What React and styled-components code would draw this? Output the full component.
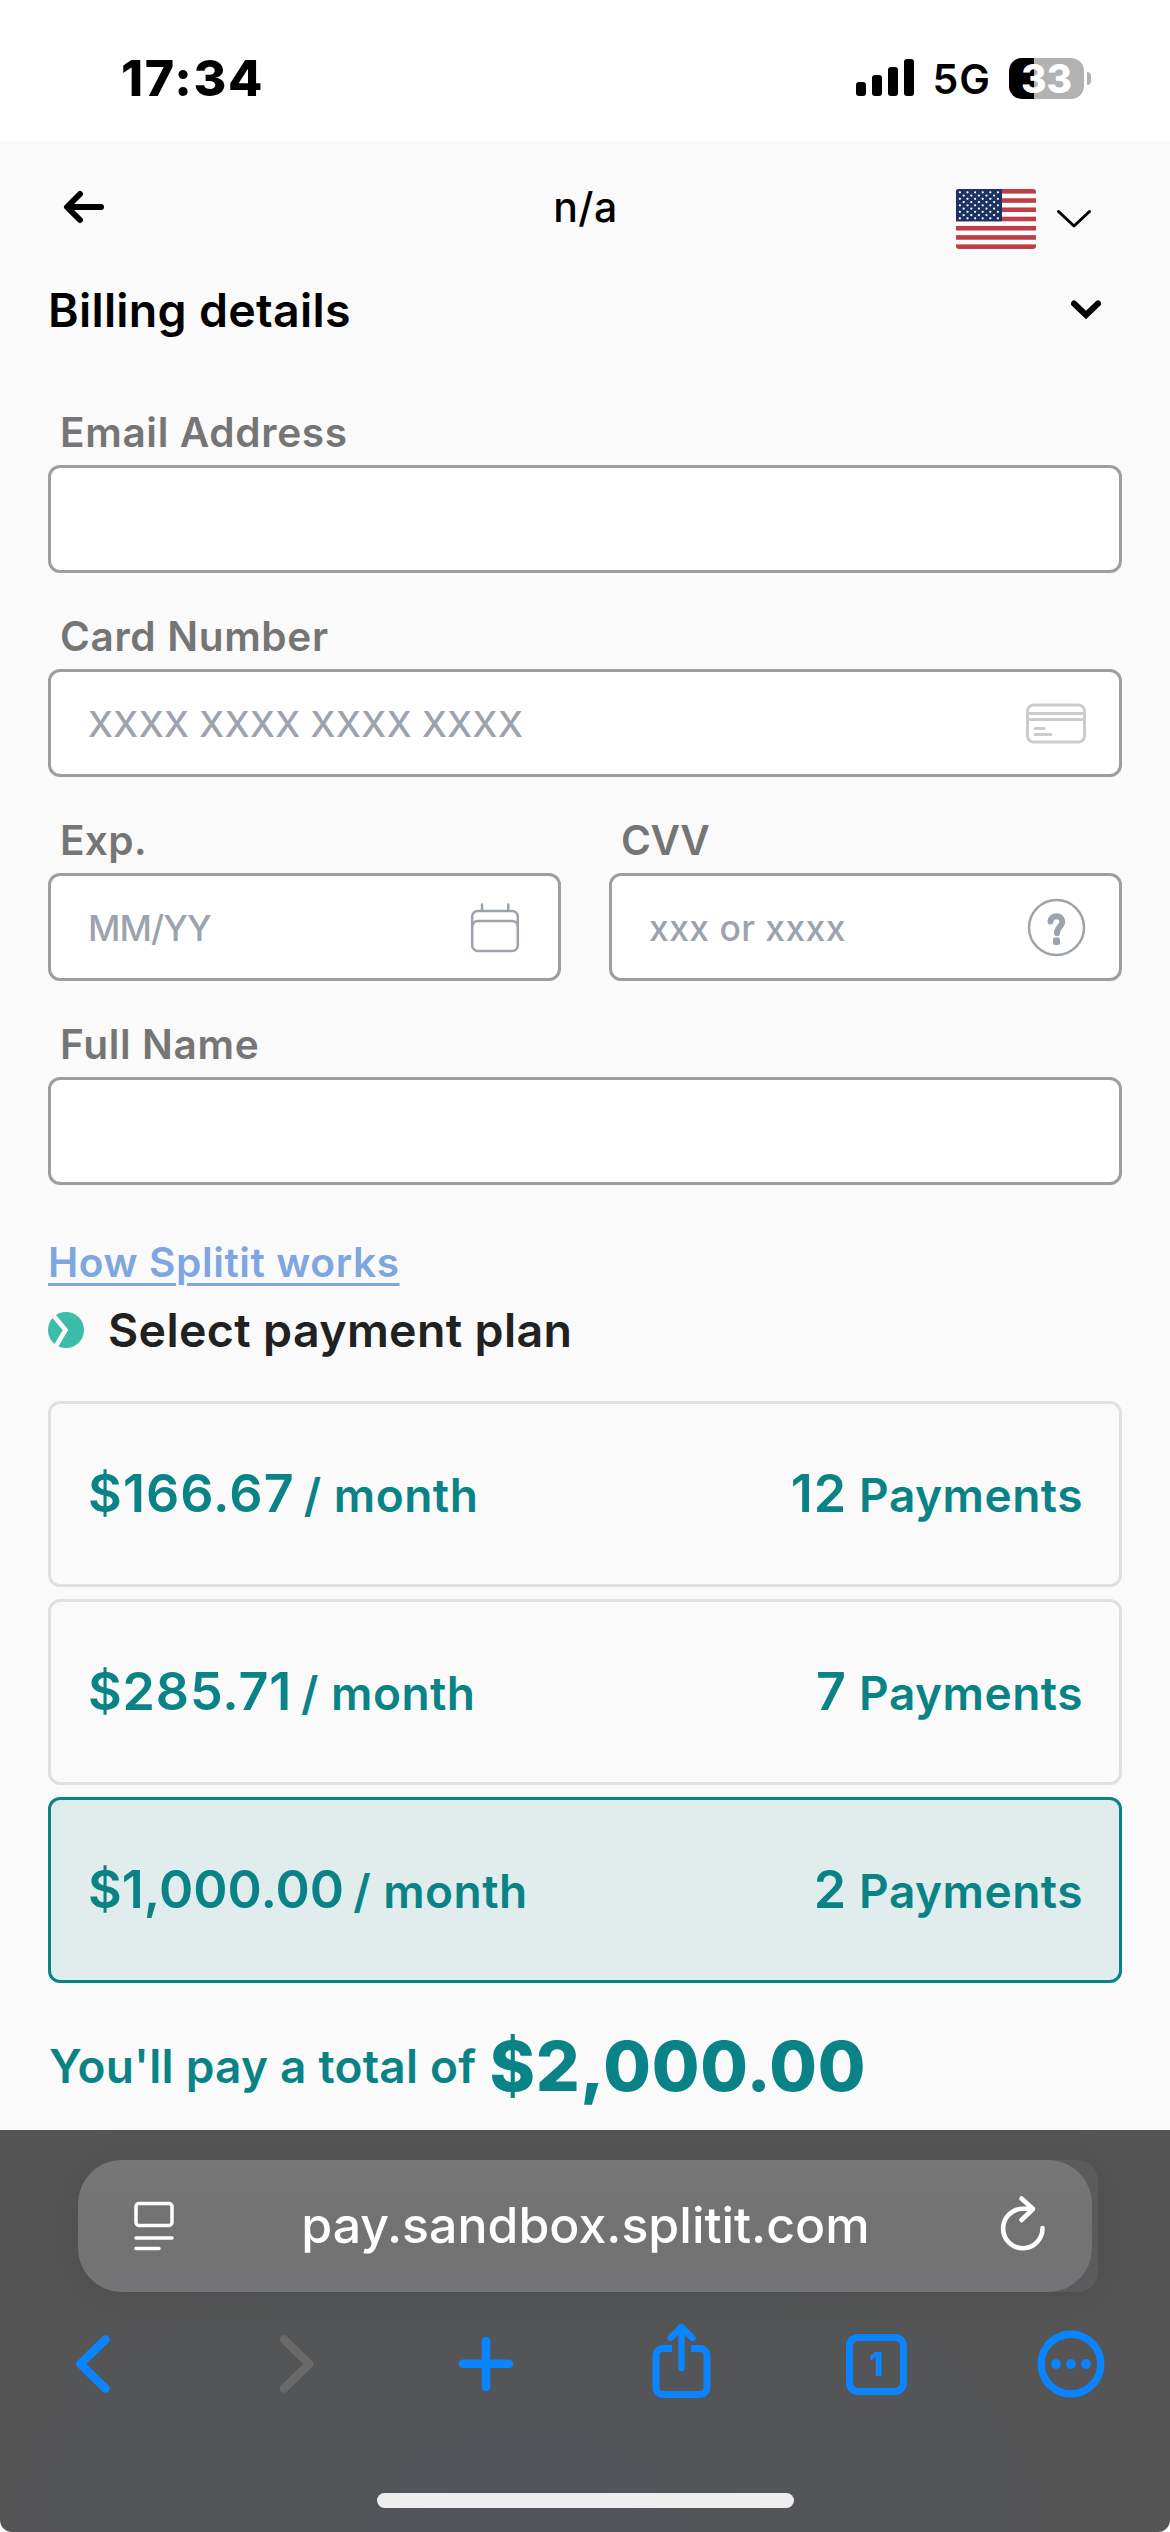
import styled, {createGlobalStyle} from "styled-components";

const GlobalStyle = createGlobalStyle`
    * {
        box-sizing: border-box;
    }
    body {
        margin: 0;
        background: #fff;
        font-family: Inter, "Liberation Sans", sans-serif;
        font-weight: 600;
    }
    svg {
        display: block;
        flex: none;
    }
`
const Screen = styled.div`
    width: 1170px;
    height: 2532px;
    overflow: hidden;
    display: flex;
    flex-direction: column;
`

/* status bar */
const StatusBar = styled.div`
    height: 141px;
    flex: none;
    padding: 15px 79px 0 121px;
    display: flex;
    align-items: center;
    justify-content: space-between;
    color: #000;
`
const Clock = styled.span`
    font-size: 50px;
    font-weight: 800;
    letter-spacing: 1.7px;
`
const StatusIcons = styled.div`
    display: flex;
    align-items: center;
`
const Network = styled.span`
    margin: 2px 18px 0 19px;
    font-size: 41px;
    letter-spacing: 1px;
`
const Battery = styled.div`
    width: 75px;
    height: 41px;
    border-radius: 13px;
    background: linear-gradient(to right, #000 33.3%, #b2b2b2 33.3%);
    color: #fff;
    font-size: 39px;
    font-weight: 800;
    line-height: 41px;
    text-align: center;
`
const BatteryTip = styled.div`
    width: 4px;
    height: 13px;
    margin-left: 3px;
    border-radius: 0 4px 4px 0;
    background: #b2b2b2;
`

/* checkout page */
const Page = styled.main`
    height: 1989px;
    flex: none;
    padding: 0 48px;
    background: #fafafa;
    display: flex;
    flex-direction: column;
`
const Header = styled.header`
    height: 132px;
    display: grid;
    grid-template-columns: 1fr auto 1fr;
    align-items: center;
    padding: 0 31px 0 15px;
`
const Merchant = styled.span`
    font-size: 41px;
    font-weight: 500;
    line-height: 50px;
    letter-spacing: 0.5px;
    padding-left: 17px;
`
const Language = styled.div`
    justify-self: end;
    margin-top: 24px;
    display: flex;
    align-items: center;
    gap: 19px;
`
const SectionTitle = styled.h2`
    height: 74px;
    margin: 0;
    padding-right: 21px;
    display: flex;
    align-items: center;
    justify-content: space-between;
    font-size: 46.5px;
    font-weight: 600;
    letter-spacing: 0.3px;
`
const Form = styled.form`
    display: grid;
    grid-template-columns: 1fr 1fr;
    gap: 38px 48px;
    padding-top: 60px;
`
const Field = styled.label`
    grid-column: ${props => props.$half ? "auto" : "1 / -1"};
    min-width: 0;
`
const FieldLabel = styled.span`
    display: block;
    margin: 0 0 7px 12px;
    padding-top: 1px;
    color: #757575;
    font-size: 40.6px;
    line-height: 50px;
    letter-spacing: ${props => props.$tracking ?? 0.65}px;
`
const InputBox = styled.div`
    height: 108px;
    padding: 0 33px 0 37px;
    border: 3px solid #9e9e9e;
    border-radius: 12px;
    background: #fff;
    display: flex;
    align-items: center;
`
const Input = styled.input`
    flex: 1;
    min-width: 0;
    height: 60px;
    padding: 2px 0 0;
    border: none;
    outline: none;
    background: none;
    font: inherit;
    font-size: 35.5px;
    font-weight: 500;
    letter-spacing: ${props => props.$tracking ?? 0}px;

    &::placeholder {
        color: #9ca3af;
        opacity: 1;
    }
`
const HelpLink = styled.a`
    align-self: flex-start;
    margin-top: 53px;
    color: #7ea6e0;
    font-size: 40.6px;
    line-height: 50px;
    letter-spacing: 0.6px;
    text-decoration: underline;
    text-decoration-thickness: 3px;
    text-underline-offset: 6px;
`
const PlanTitle = styled.h3`
    margin: 12px 0 41px;
    height: 60px;
    display: flex;
    align-items: center;
    gap: 24px;
    color: #212121;
    font-size: 46.5px;
    font-weight: 600;
    letter-spacing: 0.35px;
`
const Plans = styled.div`
    display: flex;
    flex-direction: column;
    gap: 12px;
`
const Plan = styled.div`
    height: 186px;
    padding: 0 36px 0 37px;
    border: 3px solid ${props => props.$selected ? "#0a8386" : "#e0e0e0"};
    border-radius: 12px;
    background: ${props => props.$selected ? "#e1edec" : "transparent"};
    color: #0a8386;
    display: flex;
    align-items: center;
    justify-content: space-between;
    font-size: 46px;
    line-height: 64px;
`
const PlanText = styled.div`
    letter-spacing: 0.5px;
    white-space: nowrap;
`
const Amount = styled.span`
    margin-right: 9px;
    font-size: 52px;
    letter-spacing: ${props => props.$tracking}px;
`
const Count = styled.span`
    font-size: 52px;
    letter-spacing: 1px;
`
const Total = styled.div`
    height: 100px;
    margin-top: 33px;
    padding-left: 1px;
    display: flex;
    align-items: center;
    gap: 13px;
    color: #0a8386;
    font-size: 46px;
    letter-spacing: 0.22px;
`
const TotalAmount = styled.strong`
    font-size: 69px;
    font-weight: 800;
    letter-spacing: 0.7px;
`

/* browser chrome */
const BrowserBar = styled.footer`
    height: 402px;
    flex: none;
    padding-top: 30px;
    border-radius: 0 0 12px 12px;
    background: radial-gradient(ellipse at 45% 100%, #51555a 0, #545557 40%, #555 75%);
`
const NextTab = styled.div`
    margin: 0 72px 0 78px;
    padding-right: 6px;
    border-radius: 44px 20px 20px 44px;
    background: #5b5b5d;
    box-shadow: 0 4px 40px rgba(0, 0, 0, 0.1);
`
const AddressBar = styled.div`
    height: 132px;
    padding: 0 41px 0 56px;
    border-radius: 44px;
    background: linear-gradient(#777, #727272 50%, #747476);
    color: #fff;
    display: flex;
    align-items: center;
    justify-content: space-between;
`
const Address = styled.span`
    padding: 0 2px 2px 0;
    font-size: 50px;
    font-weight: 500;
    letter-spacing: 0;
`
const Actions = styled.nav`
    height: 144px;
    padding: 0 63px 0 60px;
    display: flex;
    align-items: center;
    justify-content: space-between;
`
const TabCount = styled.div`
    width: 61px;
    height: 61px;
    margin: 0 5px 0 6px;
    border: 7px solid #0a84ff;
    border-radius: 12px;
    color: #0a84ff;
    font-size: 32px;
    font-weight: 800;
    line-height: 47px;
    text-align: center;
`
const HomeIndicator = styled.div`
    width: 417px;
    height: 15px;
    margin: 57px 0 0 377px;
    border-radius: 8px;
    background: #eee;
`

const SignalIcon = () => (
    <svg width="58" height="38" viewBox="0 0 58 38">
        <rect x="0" y="23" width="10" height="14" rx="3"/>
        <rect x="16" y="16" width="10" height="21" rx="3"/>
        <rect x="32" y="8" width="10" height="29" rx="3"/>
        <rect x="48" y="0" width="10" height="37" rx="3"/>
    </svg>
)

const BackArrow = () => (
    <svg width="42" height="34" viewBox="0 0 42 34" fill="none" stroke="#000" strokeWidth="6" strokeLinecap="round">
        <path d="M17 4L4 17l13 13M5 17h33" strokeLinejoin="round"/>
    </svg>
)

const Flag = () => {
    const stars = []
    for (let row = 0; row < 9; row++) {
        for (let col = row % 2; col < 11; col += 2) {
            stars.push(<circle key={`${row}-${col}`} cx={3.9 + col * 3.8} cy={3.3 + row * 3.25} r="1.15"/>)
        }
    }
    return (
        <svg width="80" height="60" viewBox="0 0 80 60">
            <clipPath id="flag"><rect width="80" height="60" rx="3"/></clipPath>
            <g clipPath="url(#flag)">
                <rect width="80" height="60" fill="#fff"/>
                {[0, 1, 2, 3, 4, 5, 6].map(i => (
                    <rect key={i} y={i * 9.23} width="80" height="4.6" fill="#bf3d47"/>
                ))}
                <rect width="46" height="32.3" fill="#1b3262"/>
                <g fill="#fff">{stars}</g>
            </g>
        </svg>
    )
}

const ThinChevron = () => (
    <svg width="36" height="20" viewBox="0 0 36 20" fill="none" stroke="#000" strokeWidth="3" strokeLinecap="round">
        <path d="M3.5 2.5L19 17L34.5 2.5" strokeLinejoin="round"/>
    </svg>
)

const BoldChevron = () => (
    <svg width="30" height="20" viewBox="0 0 30 20" fill="none" stroke="#000" strokeWidth="6" strokeLinecap="round">
        <path d="M3 3.5l12 11.5L27 3.5"/>
    </svg>
)

const CardIcon = () => (
    <svg width="60" height="42" viewBox="0 0 60 42" fill="none" stroke="#ccc" strokeWidth="3">
        <rect x="1.5" y="3" width="57" height="37" rx="6"/>
        <path d="M2 11.5h56M2 17.5h56"/>
        <path d="M9 26.5h9M9 32.5h16" strokeLinecap="round"/>
    </svg>
)

const CalendarIcon = () => (
    <svg width="58" height="52" viewBox="0 0 58 52" fill="none" stroke="#9ca3af" strokeWidth="2.5">
        <rect x="5.2" y="10" width="45.6" height="40" rx="5.5"/>
        <path d="M5.2 25.5a5.500 5.500 0 0 1 5.500-5.500h34.600a5.500 5.500 0 0 1 5.500 5.500"/>
        <path d="M15 3.5v6M41.3 3.5v6" strokeLinecap="round"/>
    </svg>
)

const HelpIcon = () => (
    <svg width="59" height="59" viewBox="0 0 59 59" fill="none" stroke="#9ca3af">
        <circle cx="29.5" cy="29.5" r="27.5" strokeWidth="2.5"/>
        <path d="M23.5 23.5c.3-3.3 2.7-5.2 6-5.2s5.800 2.200 5.800 5.400c0 5-5.300 5.300-5.300 11.500" strokeWidth="6" strokeLinecap="round"/>
        <rect x="26" y="39.5" width="7" height="7.5" rx="2" fill="#9ca3af" stroke="none"/>
    </svg>
)

const SplititMark = () => (
    <svg width="36" height="36" viewBox="0 0 36 36">
        <circle cx="18" cy="18" r="18" fill="#3bbda8"/>
        <path d="M5 3L17.5 18L7.5 35" fill="none" stroke="#fafafa" strokeWidth="4.6"/>
    </svg>
)

const PageIcon = () => (
    <svg width="40" height="50" viewBox="0 0 40 50" fill="none" stroke="#fff" strokeWidth="3.5">
        <rect x="2" y="2.5" width="36" height="22" rx="3"/>
        <path d="M2 37h36M2 47.500h23" strokeLinecap="round"/>
    </svg>
)

const ReloadIcon = () => (
    <svg width="52" height="62" viewBox="0 0 52 62" fill="none" stroke="#fff" strokeWidth="4.6" strokeLinecap="round" strokeLinejoin="round">
        <path d="M43.5 33A19.700 19.700 0 1 1 23.800 13.800h10"/>
        <path d="M22.5 3.5L34 14L22.5 25"/>
    </svg>
)

const ActionIcon = styled.svg`
    width: 72px;
    height: 84px;
    fill: none;
    stroke: ${props => props.$muted ? "#6a6a6a" : "#0a84ff"};
    stroke-width: 8.6px;
    stroke-linecap: round;
    stroke-linejoin: round;
`

const plans = [
    {amount: "$166.67", count: 12, tracking: 1.1},
    {amount: "$285.71", count: 7, tracking: 0.8},
    {amount: "$1,000.00", count: 2, tracking: 0, selected: true},
]

function BillingForm() {
    return (
        <Form>
            <Field>
                <FieldLabel>Email Address</FieldLabel>
                <InputBox><Input type="email"/></InputBox>
            </Field>
            <Field>
                <FieldLabel>Card Number</FieldLabel>
                <InputBox>
                    <Input placeholder="XXXX XXXX XXXX XXXX" $tracking={0.47}/>
                    <CardIcon/>
                </InputBox>
            </Field>
            <Field $half>
                <FieldLabel $tracking={0.3}>Exp.</FieldLabel>
                <InputBox>
                    <Input placeholder="MM/YY" $tracking={-0.9}/>
                    <CalendarIcon/>
                </InputBox>
            </Field>
            <Field $half>
                <FieldLabel $tracking={-0.4}>CVV</FieldLabel>
                <InputBox>
                    <Input placeholder="xxx or xxxx" $tracking={0.4}/>
                    <HelpIcon/>
                </InputBox>
            </Field>
            <Field>
                <FieldLabel>Full Name</FieldLabel>
                <InputBox><Input/></InputBox>
            </Field>
        </Form>
    )
}

function App() {
    return (
        <Screen>
            <GlobalStyle/>
            <StatusBar>
                <Clock>17:34</Clock>
                <StatusIcons>
                    <SignalIcon/>
                    <Network>5G</Network>
                    <Battery>33</Battery>
                    <BatteryTip/>
                </StatusIcons>
            </StatusBar>
            <Page>
                <Header>
                    <BackArrow/>
                    <Merchant>n/a</Merchant>
                    <Language>
                        <Flag/>
                        <ThinChevron/>
                    </Language>
                </Header>
                <SectionTitle>
                    Billing details
                    <BoldChevron/>
                </SectionTitle>
                <BillingForm/>
                <HelpLink>How Splitit works</HelpLink>
                <PlanTitle>
                    <SplititMark/>
                    Select payment plan
                </PlanTitle>
                <Plans>
                    {plans.map(plan => (
                        <Plan key={plan.count} $selected={plan.selected}>
                            <PlanText>
                                <Amount $tracking={plan.tracking}>{plan.amount}</Amount>/ month
                            </PlanText>
                            <PlanText>
                                <Count>{plan.count}</Count> Payments
                            </PlanText>
                        </Plan>
                    ))}
                </Plans>
                <Total>
                    You'll pay a total of
                    <TotalAmount>$2,000.00</TotalAmount>
                </Total>
            </Page>
            <BrowserBar>
                <NextTab>
                    <AddressBar>
                        <PageIcon/>
                        <Address>pay.sandbox.splitit.com</Address>
                        <ReloadIcon/>
                    </AddressBar>
                </NextTab>
                <Actions>
                    <ActionIcon viewBox="0 0 72 84"><path d="M45.5 17.5L20.3 42L45.5 66.5"/></ActionIcon>
                    <ActionIcon viewBox="0 0 72 84" $muted><path d="M29 17.5L54.2 42L29 66.5"/></ActionIcon>
                    <ActionIcon viewBox="0 0 72 84"><path d="M36 19v46M13 41.7h46"/></ActionIcon>
                    <ActionIcon viewBox="0 0 72 84">
                        <path d="M27 26.5h-9a7 7 0 0 0-7 7v32a7 7 0 0 0 7 7h37a7 7 0 0 0 7-7v-32a7 7 0 0 0-7-7h-9" strokeWidth="7" strokeLinecap="butt"/>
                        <path d="M36.5 5v41M25.500 16l11-11l11 11" strokeWidth="6.5"/>
                    </ActionIcon>
                    <TabCount>1</TabCount>
                    <ActionIcon viewBox="0 0 72 84">
                        <circle cx="36" cy="42" r="29.8" strokeWidth="7.4"/>
                        <g fill="#0a84ff" stroke="none">
                            <circle cx="21" cy="42" r="5"/>
                            <circle cx="36" cy="42" r="5"/>
                            <circle cx="51" cy="42" r="5"/>
                        </g>
                    </ActionIcon>
                </Actions>
                <HomeIndicator/>
            </BrowserBar>
        </Screen>
    )
}

export default App;
